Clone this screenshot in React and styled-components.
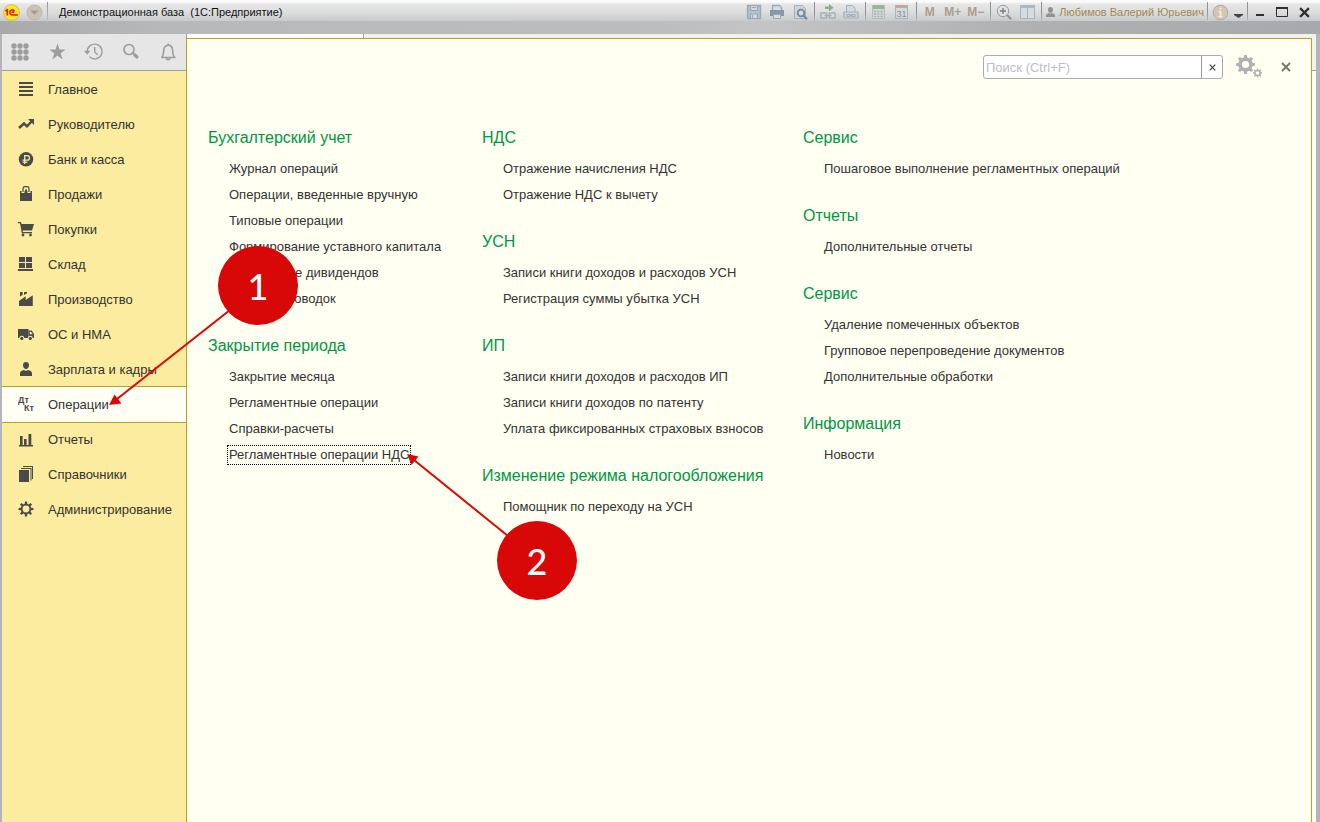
import React from "react";
import styled, { createGlobalStyle } from "styled-components";

const GlobalStyle = createGlobalStyle`
  *, *::before, *::after { box-sizing: border-box; }
  html, body, #root { height: 100%; }
  body {
    margin: 0;
    background: #b4b5b9;
    color: #333333;
    font-family: "Liberation Sans", Arial, sans-serif;
    font-size: 13px;
  }
`;

const Window = styled.div`
  position: relative;
  display: flex;
  flex-direction: column;
  min-height: 100vh;
`;

/* ---------- title bar ---------- */

const TitleBar = styled.header`
  display: flex;
  align-items: center;
  height: 34px;
  padding: 0 2px 10px 0;
  background:
    linear-gradient(
      #fbfbfb 0, #fbfbfb 2px, #e7e7e8 4px, #dcdddd 12px, #c9cacb 21px,
      transparent 21px
    ),
    linear-gradient(90deg, #a9a9ac 0, #b7b8ba 12%, #bcbdbf 50%, #c4c4c6 58%, #b0b1b3 77%, #a8a9ad 100%);
`;

const TitleStart = styled.div`
  display: flex;
  align-items: center;
  flex: 1;
  height: 24px;
  gap: 4px;
  padding-left: 1px;
`;

const AppTitle = styled.h1`
  margin: 0;
  padding-left: 11px;
  border: solid transparent;
  border-width: 0 0 0 1px;
  border-image: linear-gradient(#8f9093, #c5c6c7) 1;
  color: #111111;
  font-size: 11px;
  font-weight: 400;
  line-height: 20px;
  white-space: pre;
`;

const ToolGroup = styled.div`
  display: flex;
  align-items: center;
  height: 20px;
  padding: 0 3px 0 1px;
  border: solid transparent;
  border-width: 0 0 0 1px;
  border-image: ${(p) => (p.$plain ? "none" : "linear-gradient(#8f9093, #8f9093 50%, #c5c6c7) 1")};
`;

const ToolButton = styled.button`
  display: flex;
  align-items: center;
  justify-content: center;
  width: ${(p) => p.$width || 23}px;
  height: 20px;
  padding: 0;
  border: 0;
  background: none;
  color: #af9d8c;
  font: bold 12px "Liberation Sans", Arial, sans-serif;
`;

const UserButton = styled.button`
  display: flex;
  align-items: center;
  gap: 3px;
  height: 20px;
  padding: 0 0 0 2px;
  border: 0;
  background: none;
  color: #a5884f;
  font: 11px "Liberation Sans", Arial, sans-serif;
  white-space: nowrap;
`;

/* ---------- body ---------- */

const Body = styled.div`
  display: flex;
  flex: 1;
  padding: 0 4px 0 2px;
`;

const Sidebar = styled.aside`
  display: flex;
  flex-direction: column;
  flex: 0 0 184px;
  background: #fbec9f;
`;

const QuickBar = styled.div`
  display: flex;
  height: 37px;
  border-bottom: 1px solid #9f9f9f;
  background: #e6e6e6;
`;

const QuickButton = styled.button`
  display: flex;
  flex: 1;
  align-items: center;
  justify-content: center;
  padding: 0;
  border: 0;
  background: none;
`;

const SectionNav = styled.nav`
  display: flex;
  flex-direction: column;
  padding-top: 1px;
`;

const SectionLink = styled.a`
  display: flex;
  align-items: center;
  gap: 14px;
  height: 35px;
  padding-left: 16px;
  color: #333333;
  text-decoration: none;
  white-space: nowrap;
  background: ${(p) => (p.$active ? "#fffff5" : "transparent")};
  box-shadow: ${(p) => (p.$active ? "0 -1px #b9a312, 0 1px #b9a312" : "none")};
`;

const Main = styled.main`
  display: flex;
  flex: 1;
  flex-direction: column;
  padding-right: 4px;
  min-width: 0;
  background: linear-gradient(#f1f1f1 36px, #9f9f9f 36px, #9f9f9f 37px, #ffffff 37px);
`;

const TabStrip = styled.div`
  height: 4px;
  background: #f1f1f1;
`;

const ActiveTab = styled.div`
  width: 178px;
  height: 4px;
  border: solid #9f9f9f;
  border-width: 0 1px;
  background: #ffffff;
`;

const Panel = styled.section`
  flex: 1;
  padding: 16px 16px 40px 21px;
  border: solid #b9a312;
  border-width: 1px 1px 0 1px;
  background: #fffff2;
`;

const PanelHeader = styled.div`
  display: flex;
  align-items: center;
  justify-content: flex-end;
  height: 24px;
  margin-bottom: 41px;
`;

const SearchBox = styled.form`
  display: flex;
  width: 240px;
  height: 24px;
  border: 1px solid #ababab;
  border-radius: 3px;
  background: #ffffff;
  overflow: hidden;
`;

const SearchInput = styled.input`
  flex: 1;
  min-width: 0;
  padding: 0 2px;
  border: 0;
  outline: 0;
  background: none;
  color: #333333;
  font: 13px "Liberation Sans", Arial, sans-serif;
  &::placeholder { color: #bdbdc2; opacity: 1; }
`;

const ClearButton = styled.button`
  display: flex;
  align-items: center;
  justify-content: center;
  width: 21px;
  padding: 0;
  border: 0;
  border-left: 1px solid #9a9a9a;
  background: none;
`;

const HeaderButton = styled.button`
  display: flex;
  align-items: center;
  justify-content: center;
  width: ${(p) => p.$width}px;
  height: 24px;
  margin-left: ${(p) => p.$gap}px;
  padding: 0;
  border: 0;
  background: none;
`;

const Columns = styled.div`
  display: grid;
  grid-template-columns: 274px 321px 1fr;
`;

const Column = styled.div`
  display: flex;
  flex-direction: column;
  gap: 16px;
`;

const GroupTitle = styled.h2`
  margin: 0;
  color: #009646;
  font-size: 16px;
  font-weight: 400;
  line-height: 36px;
  white-space: nowrap;
`;

const CommandList = styled.ul`
  margin: 0;
  padding: 0 0 0 19px;
  list-style: none;
`;

const CommandItem = styled.li`
  display: flex;
  align-items: center;
  height: 26px;
`;

const CommandLink = styled.a`
  padding: 0 1px;
  border: 1px ${(p) => (p.$focused ? "dotted #000000" : "solid transparent")};
  color: #333333;
  line-height: 18px;
  text-decoration: none;
  white-space: nowrap;
`;

/* ---------- callouts over the page ---------- */

const ArrowLayer = styled.svg`
  position: absolute;
  top: 0;
  left: 0;
  pointer-events: none;
`;

const Callout = styled.div`
  position: absolute;
  top: ${(p) => p.$top}px;
  left: ${(p) => p.$left}px;
  width: 80px;
  height: 79px;
  border-radius: 50%;
  background: #d90808;
  color: #ffffff;
  font: 500 36px/80px Lato, sans-serif;
  text-align: center;
`;

/* ---------- drawings ---------- */

const INK = "#4a4a4a";

const gearPath = (cx, cy, outer, inner, hole, teeth) => {
  const step = (Math.PI * 2) / teeth;
  const at = (r, a) => `${(cx + r * Math.cos(a)).toFixed(2)} ${(cy + r * Math.sin(a)).toFixed(2)}`;
  let d = "";
  for (let i = 0; i < teeth; i += 1) {
    const a = i * step - Math.PI / 2;
    d += `${i ? "L" : "M"}${at(inner, a - step * 0.3)}L${at(outer, a - step * 0.18)}L${at(outer, a + step * 0.18)}L${at(inner, a + step * 0.3)}`;
  }
  return `${d}ZM${cx - hole} ${cy}a${hole} ${hole} 0 1 0 ${hole * 2} 0a${hole} ${hole} 0 1 0 ${-hole * 2} 0Z`;
};

const sectionIcons = {
  main: <path d="M1 1h14v2H1zM1 5h14v2H1zM1 9h14v2H1zM1 13h14v2H1z" />,
  trend: (
    <>
      <path d="M1 12L6 7.5L9 10.3L14 5" fill="none" stroke={INK} strokeWidth="2.4" />
      <path d="M10 3H16v6z" />
    </>
  ),
  ruble: (
    <>
      <circle cx="8" cy="8.3" r="7.2" />
      <path d="M6.7 13V4.6h2.5a2.2 2.2 0 0 1 0 4.6H4.6M4.6 11.2h4.8" fill="none" stroke="#fbec9f" strokeWidth="1.3" />
    </>
  ),
  bag: (
    <>
      <path d="M2 5h12v10H2z" />
      <path d="M5 7V3.500Q5 1 8 1Q11 1 11 3.500V7" fill="none" stroke="#fbec9f" strokeWidth="3" />
      <path d="M5 6V3.500Q5 .7 6.700.7H9.300Q11 .7 11 3.500V6" fill="none" stroke={INK} strokeWidth="1.200" />
      <path d="M7 3.500h2V6H7z" />
    </>
  ),
  cart: (
    <>
      <path d="M0 1h3l.6 2H16l-2 6.600H4.800L5 11h9v1.200H3.800L2 2.200H0z" />
      <circle cx="5" cy="14" r="1.400" />
      <circle cx="12.500" cy="14" r="1.400" />
    </>
  ),
  store: <path d="M1 1h6v5H1zM8 1h6v5H8zM1 7h6v5H1zM8 7h6v5H8zM0 13h15v2H0z" />,
  factory: <path d="M2 1h2.600v3L2 5.600zM6 1h3v1.300L6 4zM1 10L7.700 5.300V9L14.800 4.300V15H1z" />,
  truck: (
    <>
      <path d="M0 3h10.500v9H0z" />
      <path d="M10.500 4.500h3.200l2.300 3.500v4h-5.500zM11.700 5.700v2.500h3L13 5.700z" fillRule="evenodd" />
      <circle cx="3.800" cy="12.200" r="2.500" fill="#fbec9f" />
      <circle cx="12.300" cy="12.200" r="2.500" fill="#fbec9f" />
      <circle cx="3.800" cy="12.400" r="1.600" />
      <circle cx="12.300" cy="12.400" r="1.600" />
    </>
  ),
  person: <path d="M8 1c2.200 0 3 1.500 3 3.200S9.900 8 8 8S5 6 5 4.200S5.800 1 8 1zM2 15v-2.500C2 10.300 4 9.500 6 9c1 1 3 1 4 0c2 .5 4 1.300 4 3.500V15z" />,
  postings: (
    <g fontFamily="Liberation Sans, Arial, sans-serif" fontWeight="700" fontSize="9">
      <text x="0" y="7">Дт</text>
      <text x="6" y="15">Кт</text>
    </g>
  ),
  chart: <path d="M1 14h14v1.400H1zM2 5h2.600v9H2zM6 8h2.600v6H6zM10.500 3h2.800v11h-2.800z" />,
  books: <path d="M1 4h10v12H1zM3 2h10.500v12.500h-1V3H3zM5 0h10v13h-1V1H5z" />,
  gear: <path d={gearPath(8, 8, 7.500, 5.300, 3.400, 8)} fillRule="evenodd" />,
};

const SectionIcon = ({ name }) => (
  <svg width="16" height="17" viewBox="0 0 16 17" fill={INK} aria-hidden="true">
    {sectionIcons[name]}
  </svg>
);

const quickIcons = [
  ["Меню функций", (
    <g>
      {[4, 10, 16].flatMap((y) => [4, 10, 16].map((x) => <circle key={`${x}-${y}`} cx={x} cy={y} r="2.700" />))}
    </g>
  )],
  ["Избранное", <path d="M10.500 1.500l2 5.900h6.200l-5 3.800 1.900 6.200-5.100-3.800-5.100 3.800 1.900-6.200-5-3.800h6.200z" />],
  ["История", (
    <>
      <path d="M3.300 9.500a7.400 7.400 0 1 1 2.200 5.300M10.700 5v5l3 2.800" fill="none" stroke="#9d9d9d" strokeWidth="1.400" />
      <path d="M0 8.800h6.400L3.200 12.800z" />
    </>
  )],
  ["Поиск", (
    <>
      <circle cx="8" cy="7.500" r="5" fill="none" stroke="#9d9d9d" strokeWidth="1.700" />
      <path d="M11.500 11l2 2" stroke="#9d9d9d" strokeWidth="1.500" />
      <path d="M13.800 13l2.200 2" stroke="#9d9d9d" strokeWidth="3.200" strokeLinecap="round" />
    </>
  )],
  ["Оповещения", (
    <path d="M3 15.500h14.500M4 15c1.800-2 1.500-4 1.700-7C6 5 7.500 3.500 10 3.200S14.500 5 14.600 8c.2 3-.1 5 1.900 7M10.200 3.200V1.500M8.300 16.500c.5 1.500 3.300 1.500 3.800 0" fill="none" stroke="#9d9d9d" strokeWidth="1.600" />
  )],
];

const BLUE = "#9aa9b8";

const toolIcons = {
  save: (
    <>
      <path d="M1.500 1.500h13v13h-12l-1-1z" fill="#b3c1cd" stroke={BLUE} strokeWidth="1.400" />
      <path d="M4.500 2v4.500h7V2M4.500 14V10h7v4" fill="#d3d8dc" stroke={BLUE} strokeWidth="1.200" />
      <path d="M6 3.500h4M6.500 11v3" stroke={BLUE} fill="none" />
    </>
  ),
  print: (
    <>
      <path d="M3.500 6V1.500h7l2 2V6" fill="#d9dde0" stroke={BLUE} strokeWidth="1.300" />
      <path d="M1 6h14v6h-3v-2H4v2H1z" fill="#8698a8" />
      <path d="M4.500 10.500h7v4h-7z" fill="#d9dde0" stroke={BLUE} />
    </>
  ),
  preview: (
    <>
      <path d="M2.500 1.500h8l3 3v10h-11z" fill="#ced4d9" stroke="#a3b0bc" />
      <circle cx="9" cy="9" r="3.300" fill="#d6dde2" stroke="#71899d" strokeWidth="1.800" />
      <path d="M11.500 11.500l3.500 3.700" stroke="#71899d" strokeWidth="2.200" />
    </>
  ),
  link: (
    <>
      <path d="M5 2.500h4V0l4.500 3.700L9 7.500V5H5z" fill="#8bad8a" />
      <path d="M1 9h5.500v5H1zM9.500 9H15v5H9.500zM4.500 11.500h7" fill="#d9dde0" stroke="#a6b0b9" strokeWidth="1.500" />
    </>
  ),
  printLink: (
    <>
      <path d="M3.500 8V1.500h6l2.500 2.500v4" fill="#d5dade" stroke="#a3afba" />
      <path d="M1 8h14v6H1zM4 10.500h3v2H4zM9 10.500h3v2H9zM6 11.500h4" fill="#ced4d9" stroke="#a3afba" strokeWidth="1.200" />
    </>
  ),
  calc: (
    <>
      <path d="M1.500 1.500h12v13h-12z" fill="#d2d8d5" stroke="#b2bcba" />
      <path d="M2 1h11v4H2z" fill="#9bb39b" />
      <path d="M3 7.500h9M3 10h9M3 12.500h9" stroke="#a1b1ab" strokeWidth="1.300" strokeDasharray="2 1.300" />
    </>
  ),
  calendar: (
    <>
      <path d="M1.500 2.500h12v12h-12z" fill="#d6d9dc" stroke="#a8b3bd" />
      <path d="M1 1h13v3H1z" fill="#bfaa9b" />
      <text x="2.500" y="13" fontFamily="Liberation Sans, Arial, sans-serif" fontWeight="400" fontSize="9" fill="#7d91a3">31</text>
    </>
  ),
  zoom: (
    <>
      <circle cx="7" cy="7" r="5.700" fill="#e0e1e2" stroke="#96999d" strokeWidth="1" />
      <path d="M4 7h6M7 4v6" stroke="#777b80" strokeWidth="1.300" />
      <path d="M11.200 11.200l4 4" stroke="#8e9296" strokeWidth="2" />
    </>
  ),
  panes: (
    <>
      <path d="M1.500 1.500h14v13h-14zM8.500 3v11" fill="#d8dcdf" stroke="#a5b3bf" />
      <path d="M1 1h15v3H1z" fill="#a9b9c6" />
    </>
  ),
};

const ToolIcon = ({ name }) => (
  <svg width="16" height="16" viewBox="0 0 16 16" aria-hidden="true">{toolIcons[name]}</svg>
);

const Cross = ({ size, color, weight }) => (
  <svg width={size} height={size} viewBox="0 0 10 10" aria-hidden="true">
    <path d="M1 1l8 8M9 1l-8 8" stroke={color} strokeWidth={weight} />
  </svg>
);

/* ---------- data ---------- */

const sections = [
  ["Главное", "main"],
  ["Руководителю", "trend"],
  ["Банк и касса", "ruble"],
  ["Продажи", "bag"],
  ["Покупки", "cart"],
  ["Склад", "store"],
  ["Производство", "factory"],
  ["ОС и НМА", "truck"],
  ["Зарплата и кадры", "person"],
  ["Операции", "postings"],
  ["Отчеты", "chart"],
  ["Справочники", "books"],
  ["Администрирование", "gear"],
];

const columns = [
  [
    ["Бухгалтерский учет", [
      "Журнал операций",
      "Операции, введенные вручную",
      "Типовые операции",
      "Формирование уставного капитала",
      "Начисление дивидендов",
      "Журнал проводок",
    ]],
    ["Закрытие периода", [
      "Закрытие месяца",
      "Регламентные операции",
      "Справки-расчеты",
      "Регламентные операции НДС",
    ]],
  ],
  [
    ["НДС", ["Отражение начисления НДС", "Отражение НДС к вычету"]],
    ["УСН", ["Записи книги доходов и расходов УСН", "Регистрация суммы убытка УСН"]],
    ["ИП", [
      "Записи книги доходов и расходов ИП",
      "Записи книги доходов по патенту",
      "Уплата фиксированных страховых взносов",
    ]],
    ["Изменение режима налогообложения", ["Помощник по переходу на УСН"]],
  ],
  [
    ["Сервис", ["Пошаговое выполнение регламентных операций"]],
    ["Отчеты", ["Дополнительные отчеты"]],
    ["Сервис", [
      "Удаление помеченных объектов",
      "Групповое перепроведение документов",
      "Дополнительные обработки",
    ]],
    ["Информация", ["Новости"]],
  ],
];

const toolGroups = [
  [["save", "Сохранить"], ["print", "Печать"], ["preview", "Просмотр"]],
  [["link", "Перейти по ссылке"], ["printLink", "Получить ссылку"]],
  [["calc", "Калькулятор"], ["calendar", "Календарь"]],
];

export default function App() {
  return (
    <Window>
      <GlobalStyle />
      <TitleBar>
        <TitleStart>
          <ToolButton $width={20} aria-label="Главное меню">
            <svg width="17" height="17" viewBox="0 0 17 17">
              <circle cx="8.500" cy="8.500" r="7.900" fill="#fbe52c" stroke="#d9bd4c" />
              <path d="M2.300 7L4.300 5.800V11.500M11.500 7C10.300 5.300 6.800 5.700 6.800 8.400s2.300 2.600 8 2.600M11.300 8.600c-1-.9-2.200-.4-2.200.3" fill="none" stroke="#dd1c10" strokeWidth="1.600" />
            </svg>
          </ToolButton>
          <ToolButton $width={18} aria-label="Меню">
            <svg width="17" height="17" viewBox="0 0 17 17">
              <circle cx="8.500" cy="8.500" r="7.500" fill="#cbc2b6" stroke="#bfb6aa" />
              <path d="M4.500 6.500h8l-4 4.500z" fill="#a39a90" />
            </svg>
          </ToolButton>
          <AppTitle>{"Демонстрационная база  (1С:Предприятие)"}</AppTitle>
        </TitleStart>
        {toolGroups.map((group, i) => (
          <ToolGroup key={i} $plain={i === 0}>
            {group.map(([icon, label]) => (
              <ToolButton key={icon} aria-label={label}><ToolIcon name={icon} /></ToolButton>
            ))}
          </ToolGroup>
        ))}
        <ToolGroup>
          {["M", "M+", "M−"].map((label) => <ToolButton key={label}>{label}</ToolButton>)}
        </ToolGroup>
        <ToolGroup>
          <ToolButton aria-label="Масштаб"><ToolIcon name="zoom" /></ToolButton>
          <ToolButton aria-label="Панели"><ToolIcon name="panes" /></ToolButton>
        </ToolGroup>
        <ToolGroup>
          <UserButton>
            <svg width="11" height="12" viewBox="0 0 11 12" fill="#929396" aria-hidden="true">
              <path d="M5.500 1c1.800 0 2.500 1 2.500 2.700S7 7 5.500 7S3 5.400 3 3.700S3.700 1 5.500 1zM1 11V9.500C1 8 2.500 7.500 4 7c1 .8 2 .8 3 0c1.500.5 3 1 3 2.500V11z" />
            </svg>
            Любимов Валерий Юрьевич
          </UserButton>
        </ToolGroup>
        <ToolGroup>
          <ToolButton aria-label="Сведения">
            <svg width="17" height="17" viewBox="0 0 17 17">
              <circle cx="8.500" cy="8.500" r="7.300" fill="#d3c6b6" stroke="#b9a893" />
              <path d="M7.500 3.500h2v2h-2zM6.500 7h3v5h1.300v1.300H6.500V12h1.200V8.200H6.500z" fill="#f1eee9" />
            </svg>
          </ToolButton>
          <ToolButton $width={12} aria-label="Ещё">
            <svg width="9" height="16" viewBox="0 0 9 16"><path d="M0 10h9v1l-4.500 3L0 11z" fill="#444444" /></svg>
          </ToolButton>
        </ToolGroup>
        <ToolGroup>
          <ToolButton $width={22} aria-label="Свернуть">
            <svg width="12" height="12" viewBox="0 0 12 12"><path d="M2 8h8v2H2z" fill="#2f2f2f" /></svg>
          </ToolButton>
          <ToolButton $width={22} aria-label="Развернуть">
            <svg width="12" height="12" viewBox="0 0 12 12">
              <path d="M.5 1.500h11v9H.5z" fill="none" stroke="#2f2f2f" />
              <path d="M0 1h12v2H0z" fill="#2f2f2f" />
            </svg>
          </ToolButton>
          <ToolButton $width={22} aria-label="Закрыть"><Cross size={11} color="#2f2f2f" weight="2" /></ToolButton>
        </ToolGroup>
      </TitleBar>

      <Body>
        <Sidebar>
          <QuickBar>
            {quickIcons.map(([label, drawing]) => (
              <QuickButton key={label} aria-label={label}>
                <svg width="20" height="20" viewBox="0 0 20 20" fill="#9d9d9d">{drawing}</svg>
              </QuickButton>
            ))}
          </QuickBar>
          <SectionNav>
            {sections.map(([label, icon]) => (
              <SectionLink key={label} href="#" $active={label === "Операции"}>
                <SectionIcon name={icon} />
                {label}
              </SectionLink>
            ))}
          </SectionNav>
        </Sidebar>

        <Main>
          <TabStrip><ActiveTab /></TabStrip>
          <Panel>
            <PanelHeader>
              <SearchBox>
                <SearchInput type="text" aria-label="Поиск" placeholder="Поиск (Ctrl+F)" />
                <ClearButton type="button" aria-label="Очистить">
                  <Cross size={7} color="#444444" weight="1.700" />
                </ClearButton>
              </SearchBox>
              <HeaderButton $width={28} $gap={12} aria-label="Настройки">
                <svg width="28" height="24" viewBox="0 0 28 24" fill="#b1b1b1">
                  <path d={gearPath(10.5, 9.5, 9.5, 7.2, 3.6, 8)} fillRule="evenodd" />
                  <path d={gearPath(22.5, 18, 4.6, 3.4, 1.8, 8)} fillRule="evenodd" />
                </svg>
              </HeaderButton>
              <HeaderButton $width={18} $gap={14} aria-label="Закрыть панель">
                <Cross size={10} color="#777770" weight="2" />
              </HeaderButton>
            </PanelHeader>
            <Columns>
              {columns.map((groups, c) => (
                <Column key={c}>
                  {groups.map(([title, items], g) => (
                    <section key={g}>
                      <GroupTitle>{title}</GroupTitle>
                      <CommandList>
                        {items.map((item) => (
                          <CommandItem key={item}>
                            <CommandLink href="#" $focused={item === "Регламентные операции НДС"}>{item}</CommandLink>
                          </CommandItem>
                        ))}
                      </CommandList>
                    </section>
                  ))}
                </Column>
              ))}
            </Columns>
          </Panel>
        </Main>
      </Body>

      <ArrowLayer width="600" height="620" viewBox="0 0 600 620" aria-hidden="true">
        <g stroke="#d90808" strokeWidth="2">
          <path d="M230 310L117 399" />
          <path d="M508 536L414 460" />
        </g>
        <g fill="#d90808">
          <path d="M109 405L114.500 394.500L121.500 403.500z" />
          <path d="M407 454L418.500 456.500L411.500 465z" />
        </g>
      </ArrowLayer>
      <Callout $top={246} $left={218}>1</Callout>
      <Callout $top={521} $left={497}>2</Callout>
    </Window>
  );
}
